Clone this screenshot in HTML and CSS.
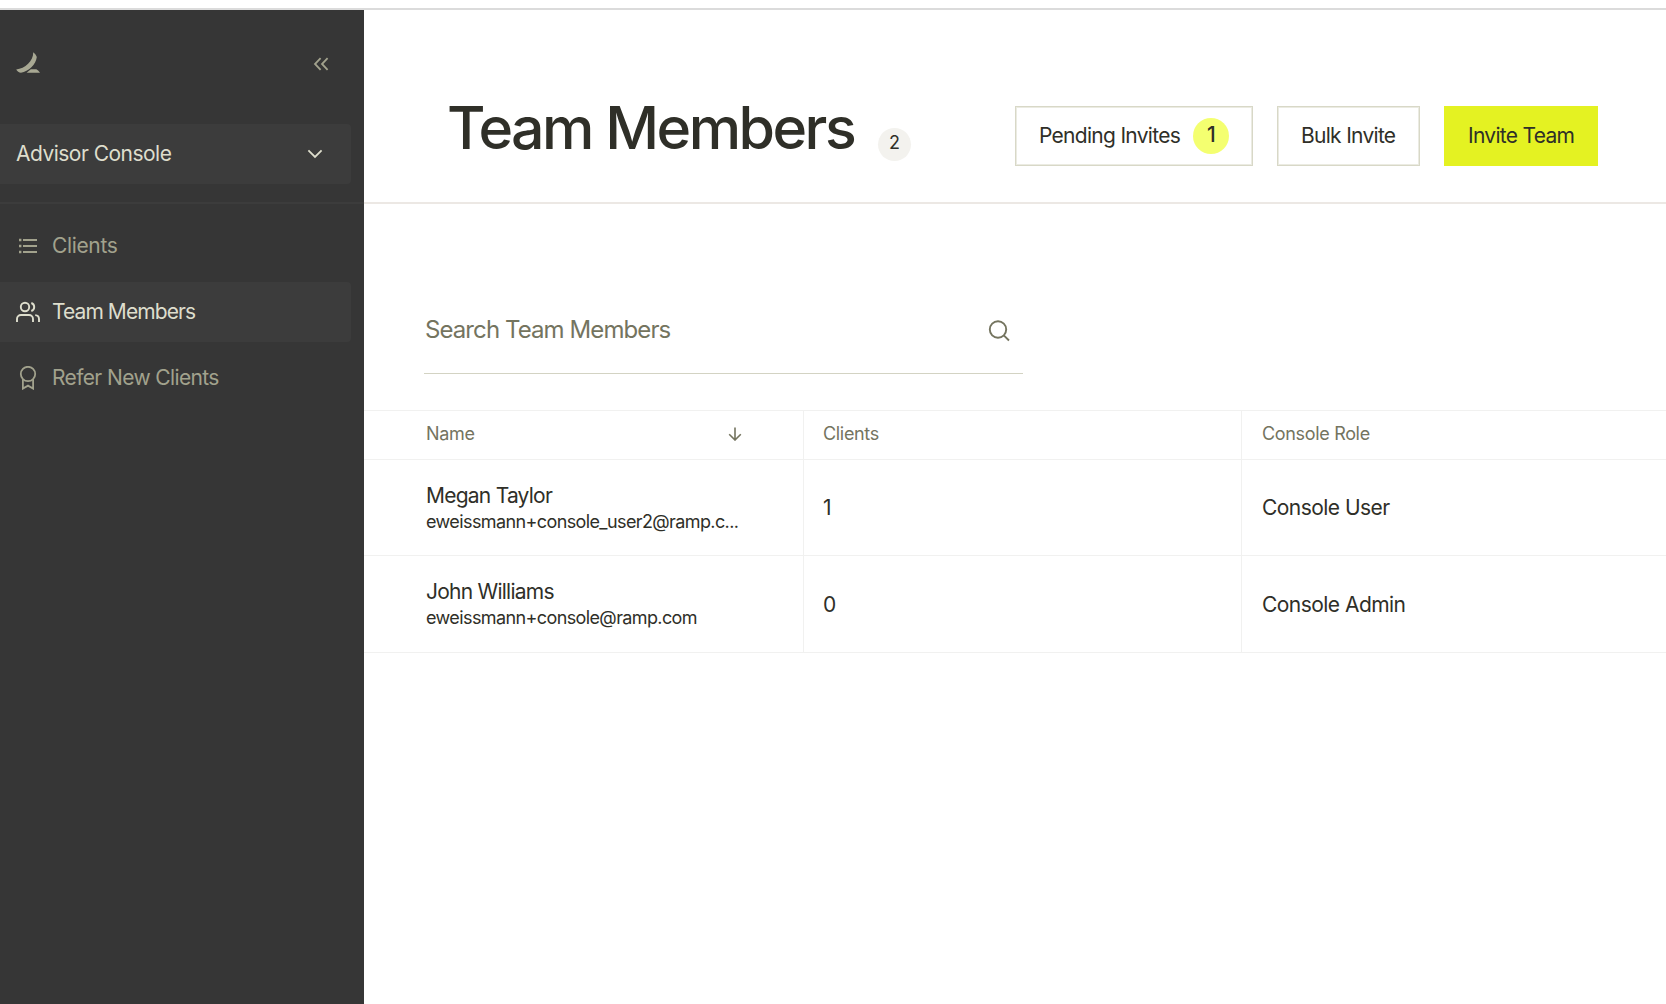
FILE: index.html
```html
<!DOCTYPE html>
<html lang="en">
<head>
    <meta charset="UTF-8">
    <meta name="viewport" content="width=device-width, initial-scale=1.0">
    <title>Team Members</title>
    <link rel="stylesheet" href="styles.css">
</head>
<body>
    <div class="app">
        <aside class="sidebar">
            <div class="sidebar-top">
                <svg class="logo" width="24" height="22" viewBox="0 0 24 22" fill="currentColor">
                    <path d="M17.2 0.2C18.6 1.4 20.3 3 20.8 5C20 12.5 12.5 19.5 5 20.8C3 20.6 1.2 19 0.2 17.4C9 16.6 17.5 9 17.2 0.2Z"/>
                    <path d="M10.6 20.8L14.8 17.2H20.4C21.8 18 23 19.4 24 20.8Z"/>
                </svg>
                <svg class="collapse" width="16" height="14" viewBox="0 0 16 14" fill="none" stroke="currentColor" stroke-width="1.8">
                    <path d="M7.6 1.2L2 7L7.6 12.8M14.6 1.2L9 7L14.6 12.8"/>
                </svg>
            </div>

            <div class="console-select">
                <span>Advisor Console</span>
                <svg width="16" height="10" viewBox="0 0 16 10" fill="none" stroke="currentColor" stroke-width="1.8">
                    <path d="M1.4 1.4L8 8L14.6 1.4"/>
                </svg>
            </div>

            <nav class="nav">
                <a class="nav-item">
                    <svg width="24" height="24" viewBox="0 0 24 24" fill="none" stroke="currentColor" stroke-width="2">
                        <path d="M7 6H21M7 12H21M7 18H21"/>
                        <path d="M3 6H5.4M3 12H5.4M3 18H5.4" stroke-width="2.6"/>
                    </svg>
                    <span>Clients</span>
                </a>
                <a class="nav-item active">
                    <svg width="24" height="24" viewBox="0 0 24 24" fill="none" stroke="currentColor" stroke-width="1.9">
                        <path d="M17 22V19A4 4 0 0 0 13 15H5A4 4 0 0 0 1 19V22"/>
                        <circle cx="9" cy="7" r="4.2"/>
                        <path d="M23 22V19A4 4 0 0 0 19.2 15.1M15.3 3A4.2 4.2 0 0 1 15.3 11"/>
                    </svg>
                    <span>Team Members</span>
                </a>
                <a class="nav-item">
                    <svg width="24" height="24" viewBox="0 0 24 24" fill="none" stroke="currentColor" stroke-width="1.8">
                        <circle cx="12" cy="8" r="7.2"/>
                        <path d="M6.9 13.2V22.6L12 19.6L17.1 22.6V13.2"/>
                    </svg>
                    <span>Refer New Clients</span>
                </a>
            </nav>
        </aside>

        <main class="main">
            <header class="header">
                <h1 class="title">Team Members</h1>
                <span class="count">2</span>
                <div class="actions">
                    <button class="btn pending">Pending Invites <span class="invite-count">1</span></button>
                    <button class="btn bulk">Bulk Invite</button>
                    <button class="btn primary">Invite Team</button>
                </div>
            </header>

            <div class="search">
                <span>Search Team Members</span>
                <svg width="24" height="24" viewBox="0 0 24 24" fill="none" stroke="currentColor" stroke-width="1.9">
                    <circle cx="11" cy="11.5" r="8.2"/>
                    <path d="M16.8 17.3L22 22.5"/>
                </svg>
            </div>

            <div class="table">
                <div class="row head">
                    <div class="cell">
                        <span>Name</span>
                        <svg width="14" height="14" viewBox="0 0 14 14" fill="none" stroke="currentColor" stroke-width="1.6">
                            <path d="M7 0.5V13M1.2 7.2L7 13L12.8 7.2"/>
                        </svg>
                    </div>
                    <div class="cell">Clients</div>
                    <div class="cell">Console Role</div>
                </div>
                <div class="row">
                    <div class="cell">
                        <div class="member">
                            <div class="name">Megan Taylor</div>
                            <div class="email">eweissmann+console_user2@ramp.c...</div>
                        </div>
                    </div>
                    <div class="cell">1</div>
                    <div class="cell">Console User</div>
                </div>
                <div class="row">
                    <div class="cell">
                        <div class="member">
                            <div class="name">John Williams</div>
                            <div class="email">eweissmann+console@ramp.com</div>
                        </div>
                    </div>
                    <div class="cell">0</div>
                    <div class="cell">Console Admin</div>
                </div>
            </div>
        </main>
    </div>
</body>
</html>
```
FILE: styles.css
```css
* {
    margin: 0;
    padding: 0;
    box-sizing: border-box;
}

body {
    font-family: Inter, "Liberation Sans", sans-serif;
    font-size: 21px;
    color: #2f2f28;
    background: #fff;
    overflow: hidden;
}

svg {
    display: block;
    flex-shrink: 0;
}

.app {
    display: flex;
    height: 1004px;
    padding-top: 8px;
}

/* sidebar */

.sidebar {
    width: 364px;
    flex-shrink: 0;
    background: #363636;
    border-top: 2px solid #dbdbdb;
    color: #a2a28d;
}

.sidebar-top {
    height: 114px;
    display: flex;
    justify-content: space-between;
    padding: 42px 35px 0 16px;
}

.logo {
    color: #a8a893;
}

.collapse {
    margin-top: 5px;
}

.console-select {
    width: 351px;
    height: 60px;
    display: flex;
    align-items: center;
    justify-content: space-between;
    padding: 0 28px 0 16px;
    background: #3c3c3c;
    border-radius: 0 4px 4px 0;
    color: #dedecd;
    letter-spacing: -0.52px;
}

.console-select span,
.nav-item span {
    margin-top: -1px;
}

.nav {
    margin-top: 18px;
    padding-top: 12px;
    border-top: 2px solid #3c3c3c;
    display: flex;
    flex-direction: column;
    gap: 6px;
}

.nav-item {
    width: 351px;
    height: 60px;
    display: flex;
    align-items: center;
    gap: 12px;
    padding-left: 16px;
    border-radius: 0 4px 4px 0;
    letter-spacing: -0.62px;
}

.nav-item:first-child {
    letter-spacing: -0.35px;
}

.nav-item.active {
    background: #3c3c3c;
    color: #dedecd;
    letter-spacing: -0.92px;
}

/* page header */

.main {
    flex: 1;
    min-width: 0;
    border-top: 2px solid #dbdbdb;
}

.header {
    height: 194px;
    display: flex;
    align-items: flex-start;
    padding: 96px 68px 0 83px;
    border-bottom: 2px solid #ece8e4;
}

.title {
    width: 408px;
    font-size: 59px;
    font-weight: 550;
    line-height: 43px;
    letter-spacing: -2.52px;
    white-space: nowrap;
}

.count {
    width: 33px;
    height: 33px;
    margin: 22px 0 0 23px;
    border-radius: 50%;
    background: #f3f2ee;
    font-size: 18px;
    line-height: 30px;
    text-align: center;
}

.actions {
    display: flex;
    gap: 24px;
    margin-left: auto;
}

.btn {
    height: 60px;
    display: flex;
    align-items: center;
    justify-content: space-between;
    padding: 0 22px 2px 23px;
    border: 1px solid #d8d8c7;
    box-shadow: inset 0 0 0 1px #ebebe2;
    background: #fff;
    color: #2f2f28;
    font: inherit;
    letter-spacing: -0.71px;
    white-space: nowrap;
}

.btn.pending {
    width: 238px;
    padding-right: 23px;
}

.btn.bulk {
    width: 143px;
}

.btn.primary {
    width: 154px;
    background: #e4f222;
    border-color: #e4f222;
    box-shadow: none;
}

.invite-count {
    width: 36px;
    height: 36px;
    margin-top: 2px;
    border-radius: 50%;
    background: #f4ff70;
    font-weight: 500;
    line-height: 34px;
    text-align: center;
}

/* search */

.search {
    width: 599px;
    height: 88px;
    margin: 82px 0 36px 60px;
    display: flex;
    align-items: center;
    justify-content: space-between;
    padding: 0 12px 0 1px;
    border-bottom: 1px solid #d3d3c3;
    font-size: 24px;
    letter-spacing: -0.91px;
    color: #74745f;
}

/* table */

.table {
    border-top: 1px solid #f1f1f0;
}

.row {
    display: grid;
    grid-template-columns: 440px 438px 1fr;
    height: 96px;
    border-bottom: 1px solid #f1f1f0;
    letter-spacing: -0.54px;
}

.row:last-child {
    height: 97px;
}

.row.head {
    height: 49px;
    font-size: 18px;
    letter-spacing: -0.33px;
    color: #74745f;
}

.cell {
    display: flex;
    align-items: center;
    justify-content: space-between;
    padding-left: 19px;
    border-right: 1px solid #f1f1f0;
}

.cell:first-child {
    padding: 0 61px 0 62px;
}

.cell:last-child {
    padding-left: 20px;
    border-right: none;
}

.row.head .cell {
    padding-bottom: 3px;
}

.name {
    line-height: 28px;
    letter-spacing: -0.76px;
}

.email {
    font-size: 18px;
    line-height: 24px;
    letter-spacing: -0.61px;
    white-space: nowrap;
}
```
